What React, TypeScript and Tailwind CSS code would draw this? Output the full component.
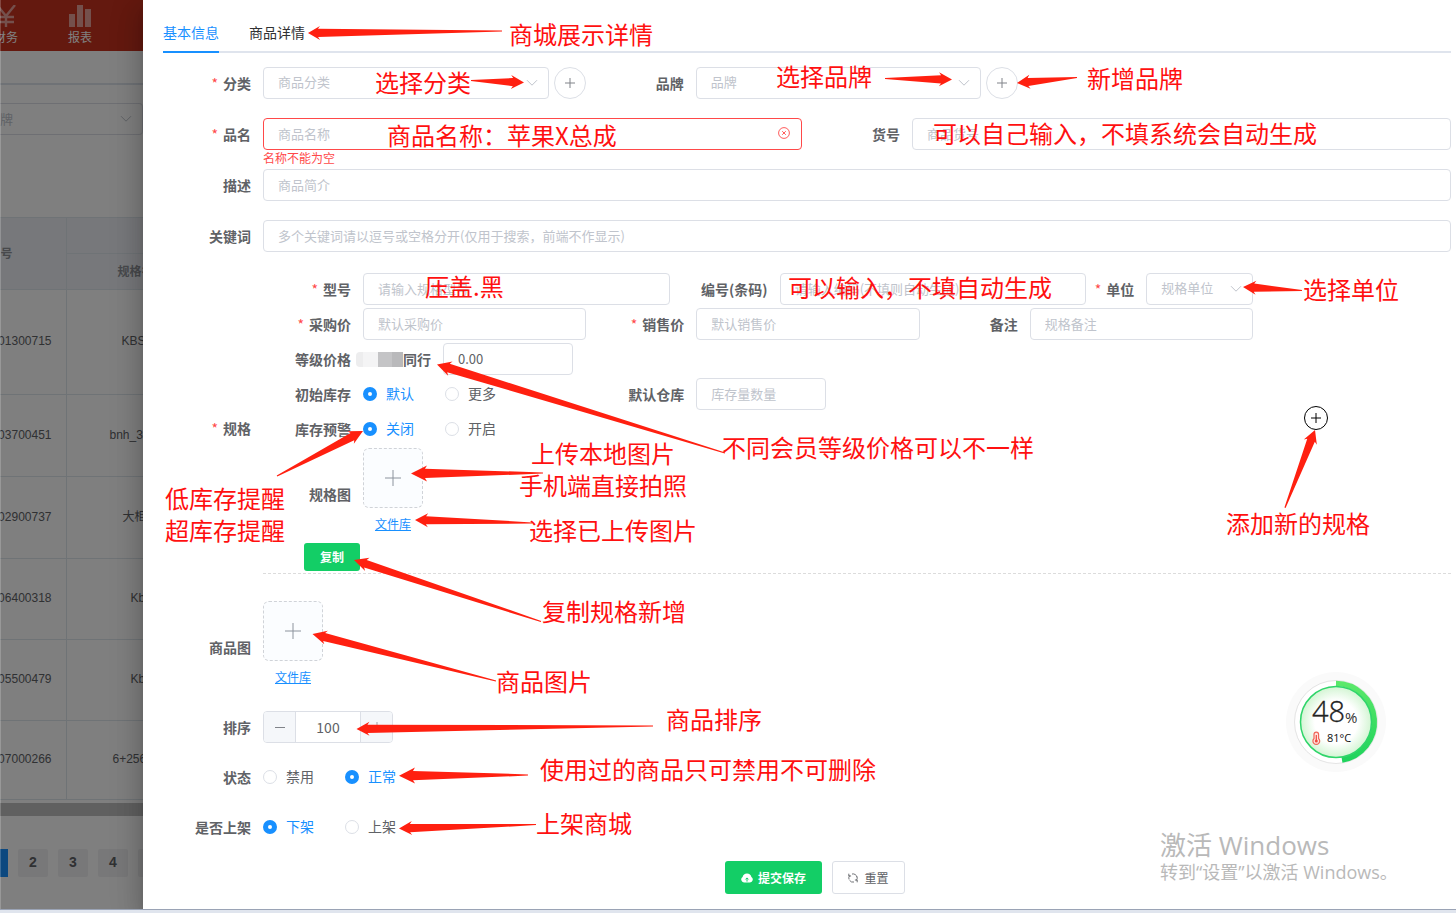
import type { ReactNode } from 'react';
import clsx from 'clsx';

const inputClass =
  'block h-8 w-full min-w-0 rounded border border-[#dcdfe6] bg-white px-[14px] pb-[2px] text-[13px] text-[#606266] outline-none placeholder:text-[#c0c4cc]';

function PlusIcon({ size, className }: { size: number; className?: string }) {
  return (
    <svg width={size} height={size} viewBox="0 0 16 16" fill="none" stroke="currentColor" className={className}>
      <path d="M8 0v16M0 8h16" strokeWidth={16 / size} />
    </svg>
  );
}

interface FieldProps {
  id?: string;
  label: string;
  required?: boolean;
  labelClass?: string;
  className?: string;
  children: ReactNode;
}

function Field({ id, label, required, labelClass = 'w-[100px]', className, children }: FieldProps) {
  const content = (
    <>
      {required && <span className="mr-[5px] font-normal text-[#ff4949]">*</span>}
      {label}
    </>
  );
  const classes = clsx('shrink-0 pr-3 text-right text-sm font-bold whitespace-nowrap text-[#606266]', labelClass);

  return (
    <div className={clsx('flex items-center', className)}>
      {id ? (
        <label htmlFor={id} className={classes}>
          {content}
        </label>
      ) : (
        <span className={classes}>{content}</span>
      )}
      {children}
    </div>
  );
}

function Select({ id, placeholder }: { id: string; placeholder: string }) {
  return (
    <div className="relative min-w-0 flex-1">
      <select id={id} defaultValue="" className={clsx(inputClass, 'appearance-none text-[#c0c4cc]')}>
        <option value="">{placeholder}</option>
      </select>
      <svg
        width="12"
        height="8"
        viewBox="0 0 12 8"
        fill="none"
        stroke="#c0c4cc"
        className="pointer-events-none absolute top-3 right-[11px]"
      >
        <path d="M1 1.2l5 5 5-5" />
      </svg>
    </div>
  );
}

function RoundAdd({ label }: { label: string }) {
  return (
    <button
      type="button"
      aria-label={label}
      className="ml-[5px] flex size-8 shrink-0 items-center justify-center rounded-full border border-[#dcdfe6] text-[#808389]"
    >
      <PlusIcon size={10} />
    </button>
  );
}

function RadioPair({ name, options, checked }: { name: string; options: string[]; checked: number }) {
  return (
    <div className="flex h-8 items-center gap-[31px]">
      {options.map((option, i) => (
        <label
          key={option}
          className={clsx('flex items-center gap-[9px] text-sm', i === checked ? 'text-[#1890ff]' : 'text-[#606266]')}
        >
          <input
            type="radio"
            name={name}
            defaultChecked={i === checked}
            className="size-[14px] appearance-none rounded-full border border-[#dcdfe6] bg-white checked:border-[5px] checked:border-[#1890ff]"
          />
          <span className="pb-[2px]">{option}</span>
        </label>
      ))}
    </div>
  );
}

function Upload() {
  return (
    <div className="flex w-[60px] flex-col items-center">
      <button
        type="button"
        aria-label="上传图片"
        className="flex size-[60px] items-center justify-center rounded-md border border-dashed border-[#d0d3d8] bg-[#fbfdff] text-[#8c939d]"
      >
        <PlusIcon size={16} />
      </button>
      <a href="#files" className="text-xs leading-8 text-[#1890ff] underline">
        文件库
      </a>
    </div>
  );
}

const stockRows = [
  { code: '01300715', name: 'KBS', row: 'h-[105px]', pad: 'pl-[55px]' },
  { code: '03700451', name: 'bnh_3', row: 'h-[82px]', pad: 'pl-[43px]' },
  { code: '02900737', name: '大柜', row: 'h-[82px]', pad: 'pl-[56px]' },
  { code: '06400318', name: 'Kb', row: 'h-[81px]', pad: 'pl-[64px]' },
  { code: '05500479', name: 'Kb', row: 'h-[81px]', pad: 'pl-[64px]' },
  { code: '07000266', name: '6+256', row: 'h-[79px]', pad: 'pl-[46px]' },
];

function Backdrop() {
  return (
    <aside className="relative w-[143px] shrink-0 overflow-hidden bg-white">
      <header className="flex h-[51px] bg-[#c8321f] text-xs text-white">
        <div className="-ml-[9px] flex w-[30px] shrink-0 flex-col items-center">
          <svg width="20" height="22" viewBox="0 0 20 22" fill="none" stroke="#e8a098" strokeWidth="2.4" className="mt-[5px] shrink-0">
            <path d="M1 0l9 11L19 0M10 11v11M2 12h16M2 17h16" />
          </svg>
          <span className="leading-5 whitespace-nowrap">财务</span>
        </div>
        <div className="ml-[44px] flex w-[30px] flex-col items-center">
          <svg width="22" height="22" viewBox="0 0 22 22" fill="#e8a098" className="mt-[5px] shrink-0">
            <path d="M0 9h6v13H0zM8 0h6v22H8zM16 4h6v18h-6z" />
          </svg>
          <span className="leading-5">报表</span>
        </div>
      </header>
      <div className="h-[34px] border-b-2 border-[#dfe4ed]" />
      <div className="mt-[18px] flex h-8 items-center justify-between rounded-r border border-l-0 border-[#dcdfe6] pr-[10px] text-[13px] text-[#c0c4cc]">
        牌
        <svg width="12" height="8" viewBox="0 0 12 8" fill="none" stroke="#c0c4cc">
          <path d="M1 1.2l5 5 5-5" />
        </svg>
      </div>
      <table className="mt-[82px] w-full table-fixed border-collapse font-[Liberation_Sans,Noto_Sans_CJK_SC,sans-serif] text-xs text-[#606266]">
        <thead className="bg-[#eef1f6] text-[#909399]">
          <tr className="h-[36px] border-t border-[#dfe6ec]">
            <th rowSpan={2} className="w-[66px] border-r border-[#dfe6ec] pr-[53px] text-right whitespace-nowrap">
              号
            </th>
            <th className="border-b border-[#dfe6ec]" />
          </tr>
          <tr className="h-[36px] border-b border-[#dfe6ec]">
            <th className="pl-[51px] text-left whitespace-nowrap">规格名</th>
          </tr>
        </thead>
        <tbody>
          {stockRows.map((item) => (
            <tr key={item.code} className={clsx('border-b border-[#dfe6ec]', item.row)}>
              <td className="border-r border-[#dfe6ec] pb-[2px]">
                <div className="flex justify-end pr-[14px]">{item.code}</div>
              </td>
              <td className={clsx('pb-[2px] whitespace-nowrap', item.pad)}>{item.name}</td>
            </tr>
          ))}
        </tbody>
      </table>
      <div className="mt-[3px] h-[13px] bg-[#c0c0c0]" />
      <div className="mt-[33px] flex gap-[10px] font-[Liberation_Sans,sans-serif] text-sm font-bold text-[#606266]">
        <button type="button" aria-label="1" className="h-7 w-2 shrink-0 bg-[#1890ff]" />
        {[2, 3, 4].map((page) => (
          <button key={page} type="button" className="h-7 w-[30px] shrink-0 rounded-xs bg-[#f0f0f2] pb-[2px]">
            {page}
          </button>
        ))}
        <button type="button" aria-label="5" className="h-7 w-[30px] shrink-0 rounded-xs bg-[#f0f0f2]" />
      </div>
      <div className="absolute inset-0 border-l border-white/20 bg-black/50" />
    </aside>
  );
}

function SpecFields() {
  return (
    <div className="flex min-w-0 flex-1 flex-col gap-[3px]">
      <div className="grid grid-cols-[10fr_10fr_4fr]">
        <Field id="model" label="型号" required className="pr-[10px]">
          <input id="model" placeholder="请输入规格型号" className={inputClass} />
        </Field>
        <Field id="barcode" label="编号(条码)" className="pr-[10px]">
          <input id="barcode" placeholder="请输入编码(不填则自动生成)" className={inputClass} />
        </Field>
        <Field id="unit" label="单位" required labelClass="w-[50px] flex justify-end" className="pr-[10px]">
          <Select id="unit" placeholder="规格单位" />
        </Field>
      </div>
      <div className="grid grid-cols-3">
        <Field id="buy" label="采购价" required className="pr-[10px]">
          <input id="buy" placeholder="默认采购价" className={inputClass} />
        </Field>
        <Field id="sell" label="销售价" required className="pr-[10px]">
          <input id="sell" placeholder="默认销售价" className={inputClass} />
        </Field>
        <Field id="remark" label="备注" className="pr-[10px]">
          <input id="remark" placeholder="规格备注" className={inputClass} />
        </Field>
      </div>
      <Field label="等级价格">
        <label htmlFor="peer" className="flex w-20 shrink-0 items-center justify-end pr-3 text-sm font-bold text-[#606266]">
          <span className="flex h-[15px] shrink-0 overflow-hidden rounded-l">
            <span className="w-[7px] bg-[#ededee]" />
            <span className="w-[15px] bg-[#f4f4f5]" />
            <span className="w-[14px] bg-[#c4c4c6]" />
            <span className="w-[11px] bg-[#b9b9bb]" />
          </span>
          <span className="shrink-0">同行</span>
        </label>
        <div className="w-[130px]">
          <input id="peer" defaultValue="0.00" className={clsx(inputClass, 'text-sm')} />
        </div>
      </Field>
      <div className="grid grid-cols-3">
        <Field label="初始库存">
          <RadioPair name="stock" options={['默认', '更多']} checked={0} />
        </Field>
        <Field id="warehouse" label="默认仓库">
          <div className="w-[130px]">
            <input id="warehouse" placeholder="库存量数量" className={inputClass} />
          </div>
        </Field>
      </div>
      <Field label="库存预警">
        <RadioPair name="warning" options={['关闭', '开启']} checked={0} />
      </Field>
      <Field label="规格图">
        <Upload />
      </Field>
      <button type="button" className="ml-[41px] h-7 w-14 rounded-[3px] bg-[#13ce66] text-xs font-bold text-white">
        复制
      </button>
    </div>
  );
}

function ProductForm() {
  return (
    <form className="pt-[14px]">
      <div className="-mr-[10px] mb-[19px] grid grid-cols-3">
        <Field id="category" label="分类" required className="pr-[10px]">
          <Select id="category" placeholder="商品分类" />
          <RoundAdd label="新增分类" />
        </Field>
        <Field id="brand" label="品牌" className="pr-[10px]">
          <Select id="brand" placeholder="品牌" />
          <RoundAdd label="新增品牌" />
        </Field>
      </div>
      <div className="-mr-[10px] mb-[19px] grid grid-cols-2">
        <Field id="name" label="品名" required className="pr-[10px]">
          <div className="relative flex-1">
            <input id="name" placeholder="商品名称" className={clsx(inputClass, 'border-[#ff4949]')} />
            <svg
              width="12"
              height="12"
              viewBox="0 0 12 12"
              fill="none"
              stroke="#ff4949"
              strokeWidth="0.9"
              className="absolute top-[9px] right-[12px]"
            >
              <circle cx="6" cy="6" r="5.4" />
              <path d="M4.2 4.2l3.6 3.6M7.8 4.2L4.2 7.8" />
            </svg>
            <p className="absolute top-full left-0 text-xs leading-4 text-[#ff4949]">名称不能为空</p>
          </div>
        </Field>
        <Field id="number" label="货号" className="pr-[10px]">
          <input id="number" placeholder="商品货号" className={inputClass} />
        </Field>
      </div>
      <Field id="desc" label="描述" className="mb-[19px]">
        <input id="desc" placeholder="商品简介" className={inputClass} />
      </Field>
      <Field id="keywords" label="关键词" className="mb-[21px]">
        <input id="keywords" placeholder="多个关键词请以逗号或空格分开(仅用于搜索，前端不作显示)" className={inputClass} />
      </Field>
      <Field label="规格" required labelClass="w-[100px] pt-2">
        <div className="flex min-w-0 flex-1 items-center border-b border-dashed border-[#dcdcdc] pb-[2px]">
          <SpecFields />
          <div className="w-[188px] shrink-0 pb-2 pl-[41px]">
            <button
              type="button"
              aria-label="添加规格"
              className="flex size-6 items-center justify-center rounded-full border border-black text-black"
            >
              <PlusIcon size={10} />
            </button>
          </div>
        </div>
      </Field>
      <div className="mt-[27px] flex flex-col gap-[18px]">
        <Field label="商品图">
          <Upload />
        </Field>
        <Field id="sort" label="排序">
          <div className="flex h-8 w-[130px] overflow-hidden rounded border border-[#dcdfe6] text-[#606266]">
            <button type="button" aria-label="减少" className="flex w-8 shrink-0 items-center justify-center border-r border-[#dcdfe6] bg-[#f5f7fa]">
              <span className="h-px w-[10px] bg-[#808389]" />
            </button>
            <input id="sort" defaultValue="100" className="w-full min-w-0 text-center text-sm outline-none" />
            <button type="button" aria-label="增加" className="flex w-8 shrink-0 items-center justify-center border-l border-[#dcdfe6] bg-[#f5f7fa]">
              <PlusIcon size={10} className="text-[#a0a3a9]" />
            </button>
          </div>
        </Field>
        <Field label="状态">
          <RadioPair name="status" options={['禁用', '正常']} checked={1} />
        </Field>
        <Field label="是否上架">
          <RadioPair name="shelf" options={['下架', '上架']} checked={0} />
        </Field>
      </div>
      <div className="mt-[18px] flex justify-center gap-[10px] pl-4 text-xs font-bold">
        <button type="submit" className="flex h-[33px] w-[97px] items-center justify-center gap-[5px] rounded-[3px] bg-[#13ce66] text-white">
          <svg width="12" height="10" viewBox="0 0 12 10">
            <path fill="#fff" d="M3 9.5A3 3 0 0 1 1.6 4 4.5 4.5 0 0 1 10.4 4 3 3 0 0 1 9 9.5z" />
            <path stroke="#13ce66" fill="none" d="M6 8.6V5M4.5 6.4L6 4.9l1.5 1.5" />
          </svg>
          提交保存
        </button>
        <button
          type="reset"
          className="flex h-[33px] w-[73px] items-center justify-center gap-[6px] rounded-[3px] border border-[#dcdfe6] bg-white font-normal text-[#606266]"
        >
          <svg width="10" height="10" viewBox="0 0 10 10" fill="none" stroke="currentColor" strokeWidth="0.9">
            <path d="M1 6.400A4.100 4.100 0 0 1 1.700 2.500M.8 .7v2.300h2.300M4 1A4.100 4.100 0 0 1 9 4.200M9 3.600A4.100 4.100 0 0 1 8.300 7.500M9.200 9.300V7H6.900M6 9A4.100 4.100 0 0 1 1.600 7.400" />
          </svg>
          重置
        </button>
      </div>
    </form>
  );
}

// tip x, tip y, tail x, tail y, head length, head half width
const arrows = [
  [308, 33, 502, 31, 12, 7],
  [524, 82.5, 471, 80.5, 13, 7],
  [952, 79.5, 885, 78.5, 13, 7],
  [1017, 83, 1077, 77.5, 13, 7],
  [1243, 287, 1302, 290.5, 13, 7],
  [437, 364.5, 725, 453, 14, 7.5],
  [363, 431, 277, 476, 14, 7],
  [411, 473.5, 543, 473, 16, 8],
  [415, 520, 532, 523, 13, 7],
  [354, 560, 541, 621.5, 14, 7],
  [312.5, 634, 496, 681, 14, 7],
  [356.5, 729, 653, 726, 13, 7],
  [399, 775.7, 528, 775, 16, 8],
  [399, 828.5, 536, 824.5, 13, 7],
  [1315, 430, 1285, 507.7, 13, 7],
];

function arrowPoints([tx, ty, sx, sy, len, half]: number[]) {
  const d = Math.hypot(sx - tx, sy - ty);
  const ux = (sx - tx) / d;
  const uy = (sy - ty) / d;
  const at = (along: number, side: number) => `${tx + ux * along - uy * side},${ty + uy * along + ux * side}`;
  const shaft = half * 0.58;
  const neck = len - 2;
  return [at(0, 0), at(len, half), at(neck, shaft), at(d, 0.6), at(d, -0.6), at(neck, -shaft), at(len, -half)].join(' ');
}

const notes = [
  { text: '商城展示详情', place: 'left-[509px] top-[18px]' },
  { text: '选择分类', place: 'left-[375px] top-[66px]' },
  { text: '选择品牌', place: 'left-[776px] top-[60px]' },
  { text: '新增品牌', place: 'left-[1087px] top-[62px]' },
  { text: '商品名称：苹果X总成', place: 'left-[387px] top-[119px]' },
  { text: '可以自己输入，不填系统会自动生成', place: 'left-[933px] top-[117px]' },
  { text: '压盖.黑', place: 'left-[425px] top-[270px]' },
  { text: '可以输入，不填自动生成', place: 'left-[788px] top-[271px]' },
  { text: '选择单位', place: 'left-[1303px] top-[273px]' },
  { text: '不同会员等级价格可以不一样', place: 'left-[722px] top-[431px]' },
  { text: '上传本地图片', place: 'left-[531px] top-[437px]' },
  { text: '手机端直接拍照', place: 'left-[519px] top-[469px]' },
  { text: '选择已上传图片', place: 'left-[529px] top-[514px]' },
  { text: '低库存提醒', place: 'left-[165px] top-[482px]' },
  { text: '超库存提醒', place: 'left-[165px] top-[514px]' },
  { text: '添加新的规格', place: 'left-[1226px] top-[507px]' },
  { text: '复制规格新增', place: 'left-[542px] top-[595px]' },
  { text: '商品图片', place: 'left-[496px] top-[665px]' },
  { text: '商品排序', place: 'left-[666px] top-[703px]' },
  { text: '使用过的商品只可禁用不可删除', place: 'left-[540px] top-[753px]' },
  { text: '上架商城', place: 'left-[536px] top-[807px]' },
];

function Annotations() {
  return (
    <div className="pointer-events-none absolute inset-0 overflow-hidden">
      <svg className="absolute inset-0 size-full" fill="#ff2010">
        {arrows.map((arrow) => (
          <polygon key={arrow.join()} points={arrowPoints(arrow)} />
        ))}
      </svg>
      {notes.map((note) => (
        <span key={note.text} className={clsx('absolute text-2xl leading-8 whitespace-nowrap text-[#ff1010]', note.place)}>
          {note.text}
        </span>
      ))}
    </div>
  );
}

function TemperatureGauge() {
  return (
    <svg width="104" height="104" viewBox="0 0 104 104" className="absolute top-[670px] right-[68px]">
      <defs>
        <radialGradient id="core">
          <stop offset="0.6" stopColor="#ffffff" />
          <stop offset="1" stopColor="#d3f5d3" />
        </radialGradient>
        <linearGradient id="arc" x1="0" y1="0" x2="0" y2="1">
          <stop offset="0" stopColor="#5be86a" />
          <stop offset="1" stopColor="#1fd35c" />
        </linearGradient>
      </defs>
      <circle cx="52" cy="52" r="50" fill="#fafafa" />
      <circle cx="52" cy="52" r="41.5" fill="#fff" stroke="#e4e4e4" />
      <path d="M52 13.5A38.5 38.5 0 0 1 58 90" fill="none" stroke="url(#arc)" strokeWidth="5.5" />
      <circle cx="52" cy="52" r="35.5" fill="url(#core)" stroke="#2fd56a" strokeWidth="1.5" />
      <g className="font-['Open_Sans',sans-serif]">
        <text x="28" y="52" fontSize="29" fontWeight="300" fill="#222" stroke="#222" strokeWidth="0.3">
          48
        </text>
        <text x="61" y="53" fontSize="15" fill="#333">
          %
        </text>
        <text x="43" y="72" fontSize="11" fill="#111">
          81°C
        </text>
      </g>
      <path
        d="M30 64.500a2.300 2.300 0 0 1 4.600 0v4a3.400 3.400 0 1 1-4.600 0z"
        fill="#ffe3df"
        stroke="#f0665a"
        strokeWidth="1.2"
      />
      <path d="M32.300 65v5" stroke="#f04a3c" strokeWidth="1.2" />
      <circle cx="32.3" cy="71" r="1.5" fill="#f04a3c" />
    </svg>
  );
}

export default function App() {
  return (
    <div className="relative flex min-h-screen flex-col bg-white font-[Noto_Sans_CJK_SC,sans-serif]">
      <div className="flex flex-1">
        <Backdrop />
        <main className="relative min-w-0 flex-1 bg-white pr-[5px] pb-[15px] pl-5 shadow-[0_8px_10px_-5px_rgba(0,0,0,0.2),0_16px_24px_2px_rgba(0,0,0,0.14),0_6px_30px_5px_rgba(0,0,0,0.12)]">
          <nav className="mt-[13px] flex gap-[30px] border-b-2 border-[#dfe4ed] text-sm">
            <button type="button" className="-mb-[2px] h-10 border-b-2 border-[#1890ff] text-[#1890ff]">
              基本信息
            </button>
            <button type="button" className="-mb-[2px] h-10 border-b-2 border-transparent text-[#303133]">
              商品详情
            </button>
          </nav>
          <ProductForm />
        </main>
      </div>
      <div className="relative h-1 border-t border-[#9aa3b5] bg-[#e0e5ee]" />
      <div className="pointer-events-none absolute right-[58px] bottom-[29px] w-[238px] font-['Open_Sans','Noto_Sans_CJK_SC',sans-serif] whitespace-nowrap text-[#b9b9b9]">
        <p className="text-[26px] leading-[30px]">激活 Windows</p>
        <p className="text-lg leading-6">转到“设置”以激活 Windows。</p>
      </div>
      <TemperatureGauge />
      <Annotations />
    </div>
  );
}
